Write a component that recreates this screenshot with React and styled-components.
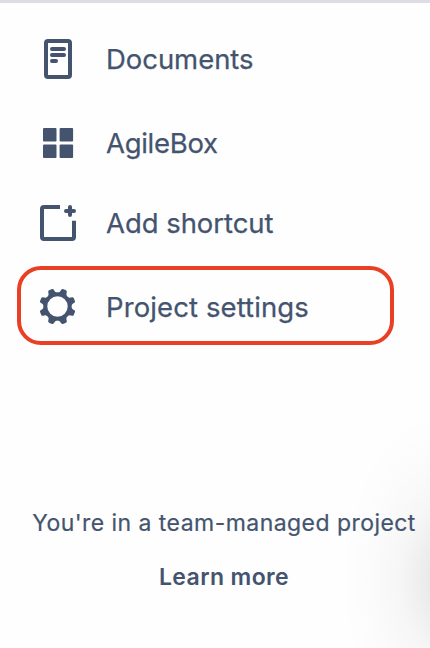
import React from "react"
import styled, { createGlobalStyle } from "styled-components"

const GlobalStyle = createGlobalStyle`
  * {
    box-sizing: border-box;
  }

  body {
    margin: 0;
    background: #fff;
  }
`

const Sidebar = styled.aside`
  display: flex;
  flex-direction: column;
  height: 648px;
  overflow: hidden;
  border-top: 3px solid #dddde5;
  background: radial-gradient(
      ellipse 108px 172px at 448px 577px,
      rgba(0, 0, 0, 0.11) 0%,
      rgba(0, 0, 0, 0.075) 20%,
      rgba(0, 0, 0, 0.03) 45%,
      rgba(0, 0, 0, 0.01) 72%,
      rgba(0, 0, 0, 0) 100%
    ),
    #fefefe;
  color: #44546f;
  font-family: Inter, "Liberation Sans", sans-serif;
`

const Menu = styled.nav`
  display: flex;
  flex-direction: column;
  padding: 16px 36px 0 17px;
`

const MenuItem = styled.a`
  display: flex;
  align-items: center;
  gap: 24px;
  height: 80px;
  margin-top: ${props => props.$gap || 0}px;
  padding-left: 17px;
  color: inherit;
  text-decoration: none;
`

const HighlightedItem = styled(MenuItem)`
  height: 79px;
  padding: 3px 0 0 13px;
  border: 4px solid #e93f24;
  border-radius: 24px;
`

const Icon = styled.svg`
  flex: none;
  width: 48px;
  height: 48px;
`

const Label = styled.span`
  font-size: 27.5px;
  line-height: 36px;
  letter-spacing: ${props => props.$tracking || 0}px;
  white-space: nowrap;
  -webkit-text-stroke: 0.25px currentColor;
`

const Footer = styled.footer`
  display: flex;
  flex-direction: column;
  align-items: center;
  gap: 24px;
  margin-top: 163px;
  padding-left: 18px;
`

const Note = styled.span`
  font-size: 23px;
  line-height: 30px;
  letter-spacing: 0.45px;
  white-space: nowrap;
  -webkit-text-stroke: 0.2px currentColor;
`

const LearnMore = styled.a`
  font-size: 23px;
  font-weight: 600;
  line-height: 30px;
  letter-spacing: 0.4px;
  color: inherit;
  text-decoration: none;
`

const DocumentIcon = () => (
  <Icon viewBox="0 0 48 48" fill="none" stroke="currentColor" strokeWidth="4">
    <rect x="12" y="6" width="24" height="36" rx="2" />
    <path d="M18 14h12M18 20h12M18 26h4" strokeLinecap="round" />
  </Icon>
)

const GridIcon = () => (
  <Icon viewBox="0 0 48 48" fill="currentColor">
    <rect x="9" y="9" width="13.5" height="13.5" rx="1" />
    <rect x="25.6" y="9" width="13.5" height="13.5" rx="1" />
    <rect x="9" y="25.4" width="13.5" height="13.5" rx="1" />
    <rect x="25.6" y="25.4" width="13.5" height="13.5" rx="1" />
  </Icon>
)

const AddShortcutIcon = () => (
  <Icon viewBox="0 0 48 48" fill="none" stroke="currentColor" strokeWidth="4">
    <path d="M26 8H10a2 2 0 0 0-2 2v28a2 2 0 0 0 2 2h28a2 2 0 0 0 2-2V21.8" />
    <path d="M36 8v8M32 12h8" strokeLinecap="round" />
  </Icon>
)

const teeth = [22.5, 67.5, 112.5, 157.5, 202.5, 247.5, 292.5, 337.5]

const GearIcon = () => (
  <Icon viewBox="0 0 48 48" fill="currentColor">
    <g transform="translate(23.5 23.5)">
      <circle r="12.2" fill="none" stroke="currentColor" strokeWidth="4" />
      {teeth.map(angle => (
        <path
          key={angle}
          transform={`rotate(${angle})`}
          d="M-4.6-13 Q-3.2-14.4-3-17 Q-2.8-18.2-1.6-18.2 H1.6 Q2.8-18.2 3-17 Q3.2-14.4 4.6-13Z"
        />
      ))}
    </g>
  </Icon>
)

export default function App() {
  return (
    <>
      <GlobalStyle />
      <Sidebar>
        <Menu>
          <MenuItem>
            <DocumentIcon />
            <Label $tracking={-0.05}>Documents</Label>
          </MenuItem>
          <MenuItem $gap={4}>
            <GridIcon />
            <Label $tracking={-0.3}>AgileBox</Label>
          </MenuItem>
          <MenuItem>
            <AddShortcutIcon />
            <Label $tracking={-0.05}>Add shortcut</Label>
          </MenuItem>
          <HighlightedItem $gap={3}>
            <GearIcon />
            <Label $tracking={0.1}>Project settings</Label>
          </HighlightedItem>
        </Menu>
        <Footer>
          <Note>You're in a team-managed project</Note>
          <LearnMore>Learn more</LearnMore>
        </Footer>
      </Sidebar>
    </>
  )
}
